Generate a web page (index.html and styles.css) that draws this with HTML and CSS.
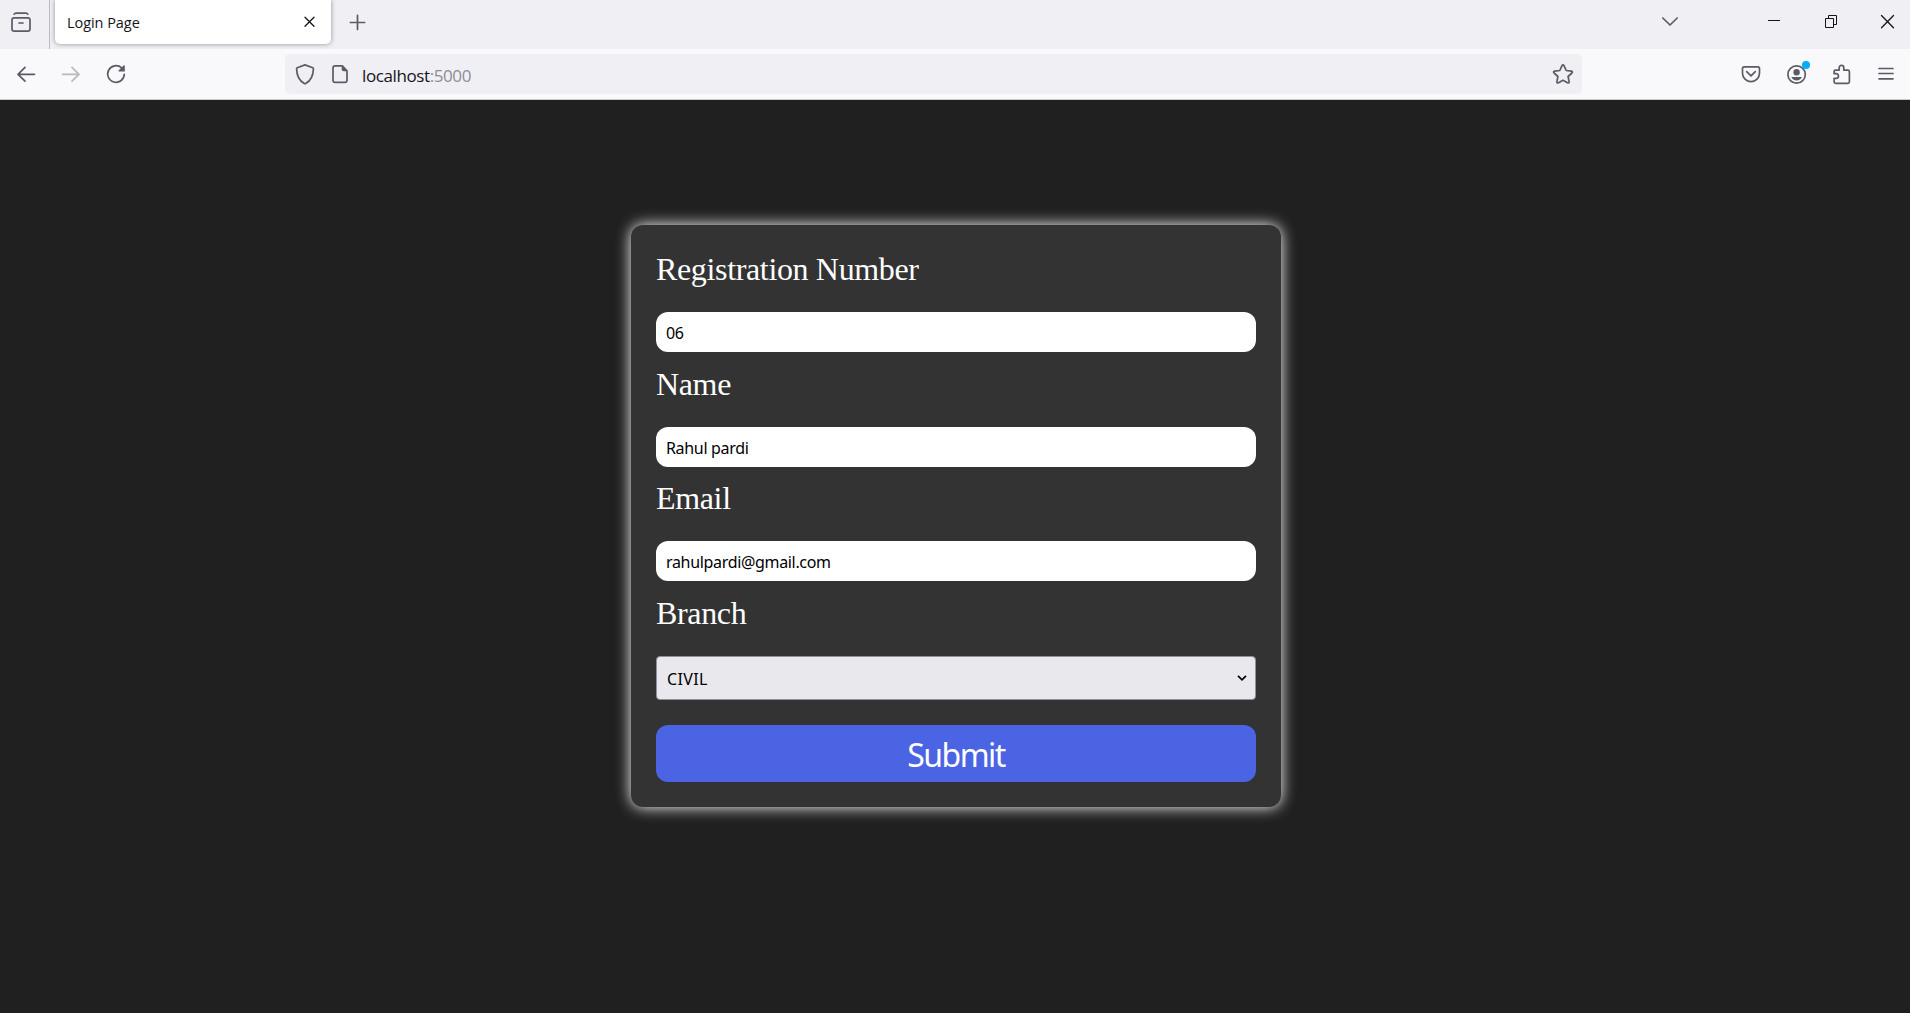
FILE: index.html
```
<!DOCTYPE html>
<html lang="en">
<head>
<meta charset="utf-8">
<title>Login Page</title>
<link rel="stylesheet" href="styles.css">
</head>
<body>
<header class="tabbar">
  <div class="view-button">
    <svg class="icon" viewBox="0 0 24 24"><rect x="3" y="8.900" width="18" height="13.200" rx="2.200"/><path d="M5.200 5.200q.6-1.100 1.800-1.100h10q1.200 0 1.800 1.100M10 14h4"/></svg>
  </div>
  <div class="tab">
    <span class="tab-title">Login Page</span>
    <svg class="icon dark" viewBox="0 0 24 24"><path d="M8 7.300l9 8.900M17 7.300l-9 8.900"/></svg>
  </div>
  <svg class="icon new-tab" viewBox="0 0 24 24"><path d="M11.500 5.300v14.200M4.400 12.500h14.200"/></svg>
  <div class="window-controls">
    <svg class="icon" viewBox="0 0 24 24"><path d="M4.800 8l7.200 7 7.200-7"/></svg>
    <svg class="icon dark thin minimise" viewBox="0 0 24 24"><path d="M6 10.500h12"/></svg>
    <svg class="icon dark thin restore" viewBox="0 0 24 24"><path d="M6.500 8.500h8v9h-8zM9.500 8.500v-3h8v9h-3"/></svg>
    <svg class="icon dark close" viewBox="0 0 24 24"><path d="M5.500 5.500l12 12.200M17.500 5.500l-12 12.200"/></svg>
  </div>
</header>
<nav class="toolbar">
  <div class="nav-buttons">
    <svg class="icon" viewBox="0 0 24 24"><path d="M20.500 12.300h-16.500M11 5.400l-7 6.900 7 6.900"/></svg>
    <svg class="icon disabled" viewBox="0 0 24 24"><path d="M3.500 12.300h16.500M13 5.400l7 6.900-7 6.900"/></svg>
    <svg class="icon" viewBox="0 0 24 24"><path d="M17.600 5.900a8.300 8.300 0 1 0 2.700 6.400"/><path class="solid" d="M20.800 3.600v5.800h-5.900q-.8-.2-.3-.8l5.300-5.300z"/></svg>
  </div>
  <div class="address">
    <svg class="icon" viewBox="0 0 24 24"><path d="M12 2.900l7.800 2.800q.6.300.6 1c-.1 7.500-2.700 12-7.700 14.800q-.7.400-1.400 0c-5-2.800-7.600-7.300-7.700-14.800q0-.7.600-1z"/></svg>
    <svg class="icon page" viewBox="0 0 24 24"><path d="M14.300 3.800h-7.100q-2.200 0-2.200 2.200v12.200q0 2.200 2.200 2.200h9.600q2.200 0 2.200-2.200v-9.400z"/><path class="solid" d="M13.700 3.500v3.700q0 2 2 2h3.700z"/></svg>
    <span class="url">localhost<span class="port">:5000</span></span>
    <svg class="icon star" viewBox="0 0 24 24"><path d="M10.900 3.800q1.100-1.700 2.200 0l2.100 4.700 5.100.6q1.900.5.600 1.900l-3.800 3.500 1 5.200q.1 1.800-1.600 1.100l-4.500-2.500-4.500 2.500q-1.700.7-1.600-1.100l1-5.200-3.800-3.500q-1.300-1.400.6-1.900l5.100-.6z"/></svg>
  </div>
  <div class="actions">
    <svg class="icon" viewBox="0 0 24 24"><path d="M5.200 4.900h13.600q1.700 0 1.700 1.700v4.600a8.500 8.500 0 0 1-17 0v-4.600q0-1.700 1.700-1.700zM7.700 9.600l4.300 4.200 4.300-4.200"/></svg>
    <div class="account">
      <svg class="icon" viewBox="0 0 24 24"><circle cx="12.600" cy="12.500" r="8.700"/><circle class="solid" cx="12.600" cy="10.200" r="3.200"/><path class="solid" d="M7.300 15h10.600q-1.500 3.400-5.300 3.400t-5.300-3.400z"/></svg>
      <span class="badge"></span>
    </div>
    <svg class="icon" viewBox="0 0 24 24"><path d="M5.100 9.600q0-1.500 1.500-1.500h3.600v-2.400a2.300 2.300 0 0 1 4.600 0v2.400h4q1.600 0 1.600 1.600v10q0 1.600-1.600 1.600h-12.100q-1.600 0-1.600-1.600v-3.300h2a2.350 2.350 0 0 0 0-4.700h-2z"/></svg>
    <svg class="icon" viewBox="0 0 24 24"><path d="M5 6.500h14M5 11.500h14M5 16.800h14"/></svg>
  </div>
</nav>
<main class="page-body">
  <form class="card">
    <div class="field">
      <label class="label" for="reg">Registration Number</label>
      <input class="input" id="reg" type="text" value="06">
    </div>
    <div class="field">
      <label class="label" for="name">Name</label>
      <input class="input" id="name" type="text" value="Rahul pardi">
    </div>
    <div class="field">
      <label class="label" for="email">Email</label>
      <input class="input" id="email" type="text" value="rahulpardi@gmail.com">
    </div>
    <div class="field">
      <label class="label" for="branch">Branch</label>
      <div class="select" id="branch">
        <span class="choice">CIVIL</span>
        <svg class="caret" viewBox="0 0 10 6"><path d="M1 .8l4 4 4-4"/></svg>
      </div>
    </div>
    <button class="submit" type="button">Submit</button>
  </form>
</main>
</body>
</html>
```
FILE: styles.css
```
* {
  box-sizing: border-box;
}

body {
  margin: 0;
  height: 1013px;
  display: flex;
  flex-direction: column;
  overflow: hidden;
  background: #202020;
  font-family: "Open Sans", sans-serif;
}

.icon {
  flex: none;
  display: block;
  width: 24px;
  height: 24px;
  fill: none;
  stroke: #5b5b66;
  stroke-width: 1.7;
  stroke-linecap: round;
  stroke-linejoin: round;
}

.icon .solid {
  fill: #5b5b66;
  stroke: none;
}

.dark {
  stroke: #15141a;
  stroke-width: 1.3;
}

.thin {
  stroke-width: 1;
  stroke-linecap: butt;
  stroke-linejoin: miter;
}

.disabled {
  opacity: 0.4;
}

.tabbar {
  flex: none;
  display: flex;
  height: 49px;
  background: #f0eff4;
}

.view-button {
  width: 50px;
  padding: 9px 0 0 9px;
  border-right: 1px solid #bcbbc2;
}

.tab {
  display: flex;
  align-items: center;
  justify-content: space-between;
  width: 276px;
  height: 44px;
  margin-left: 5px;
  padding: 0 10px 0 12px;
  border-radius: 0 0 5px 5px;
  background: #fff;
  box-shadow: 0 0 5px rgba(0, 0, 0, 0.4);
}

.tab-title {
  font-size: 14.5px;
  letter-spacing: -0.05px;
  color: #15141a;
}

.new-tab {
  margin: 10px 0 0 15px;
}

.window-controls {
  display: flex;
  margin-left: auto;
  padding: 10px 10px 0 0;
}

.minimise {
  margin-left: 80px;
}

.restore {
  margin-left: 33px;
}

.close {
  margin-left: 33px;
}

.toolbar {
  flex: none;
  display: flex;
  align-items: center;
  height: 51px;
  border-bottom: 1px solid #c5c8cc;
  background: #f9f9fb;
}

.nav-buttons {
  display: flex;
  gap: 21px;
  width: 285px;
  padding-left: 14px;
}

.address {
  display: flex;
  align-items: center;
  width: 1297px;
  height: 40px;
  padding: 0 7px 0 8px;
  border-radius: 5px;
  background: #f0eff4;
}

.page {
  margin-left: 11px;
}

.url {
  margin-left: 10px;
  padding-top: 2px;
  font-size: 17px;
  letter-spacing: -0.4px;
  color: #15141a;
}

.port {
  color: #8d8d96;
}

.star {
  margin-left: auto;
}

.actions {
  display: flex;
  gap: 21px;
  margin-left: auto;
  padding-right: 12px;
}

.account {
  position: relative;
}

.badge {
  position: absolute;
  top: -1px;
  right: -2px;
  width: 8px;
  height: 8px;
  border-radius: 50%;
  background: #00adff;
}

.page-body {
  flex: 1;
  display: flex;
  justify-content: center;
  align-items: flex-start;
  padding: 125px 0 0 2px;
}

.card {
  width: 650px;
  height: 582px;
  padding: 25px;
  border-radius: 12px;
  background: #333;
  box-shadow: 0 0 15px #fff;
}

.field {
  display: flex;
  flex-direction: column;
  margin-bottom: 12.670px;
}

.label {
  margin-bottom: 25px;
  padding-top: 1px;
  font: 32px/36px "Liberation Serif", serif;
  letter-spacing: -0.350px;
  color: #fff;
}

.input {
  width: 100%;
  height: 40px;
  padding: 2px 10px 0;
  border: 0;
  border-radius: 12px;
  background: #fff;
  font: 16px "Noto Sans", sans-serif;
  letter-spacing: -0.330px;
  color: #000;
}

.select {
  display: flex;
  align-items: center;
  justify-content: space-between;
  height: 44px;
  padding: 0 8px 0 10px;
  border: 1px solid #8f8f9d;
  border-radius: 4px;
  background: #e9e9ed;
  font: 16px "Noto Sans", sans-serif;
  color: #000;
}

.choice {
  padding-top: 2px;
  letter-spacing: 0.350px;
}

.caret {
  width: 10px;
  height: 6px;
  fill: none;
  stroke: #000;
  stroke-width: 1.7;
}

.submit {
  display: block;
  width: 100%;
  height: 57px;
  margin-top: 25px;
  padding: 2px 0 0;
  border: 0;
  border-radius: 12px;
  background: #4b64e3;
  font: 32px "Noto Sans", sans-serif;
  letter-spacing: -1.550px;
  color: #fff;
}
```
